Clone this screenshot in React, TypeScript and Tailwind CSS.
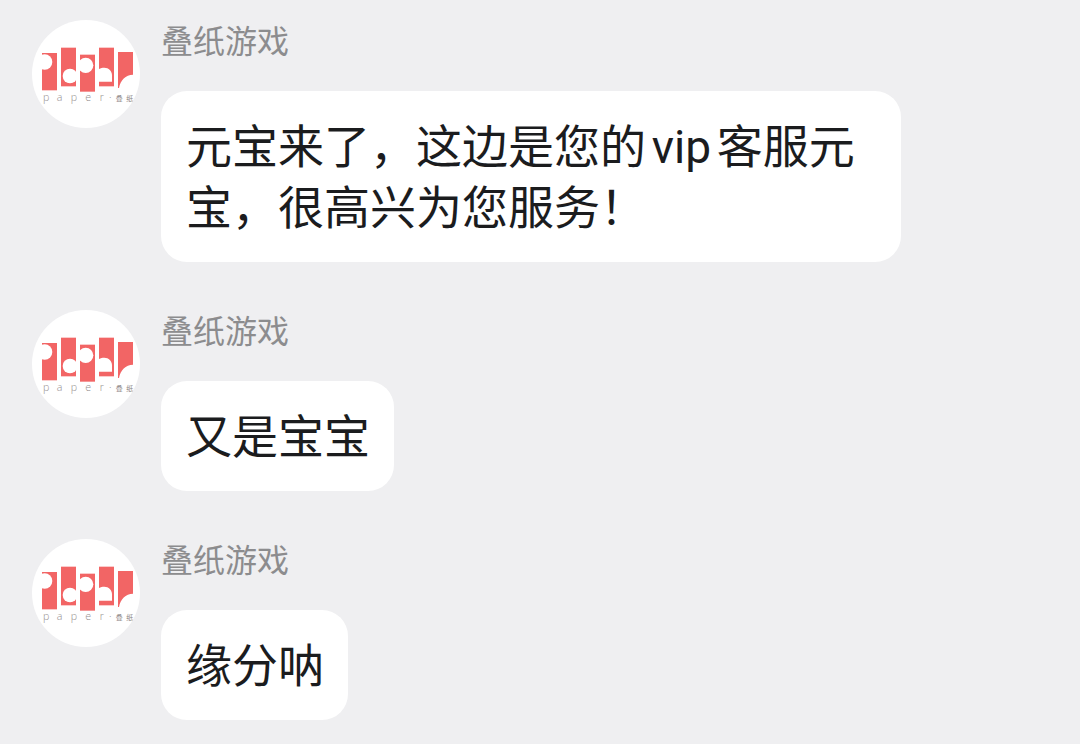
type Message = {
  id: number
  sender: string
  text: string
}

const messages: Message[] = [
  { id: 1, sender: '叠纸游戏', text: '元宝来了，这边是您的vip客服元宝，很高兴为您服务！' },
  { id: 2, sender: '叠纸游戏', text: '又是宝宝' },
  { id: 3, sender: '叠纸游戏', text: '缘分呐' },
]

function PaperLogo() {
  return (
    <svg viewBox="0 0 324 324" className="w-full h-full" role="img" aria-label="paper 叠纸">
      <g fill="#f26565">
        <rect x="30" y="99" width="45" height="112" />
        <rect x="87" y="83" width="45" height="116" />
        <rect x="144" y="104" width="45" height="111" />
        <rect x="201" y="83" width="45" height="116" />
        <path d="M258 96h45v68c-22 0-38 17-42 40h-3z" />
      </g>
      <g fill="#fff">
        <circle cx="38" cy="126" r="23" />
        <circle cx="114" cy="168" r="22" />
        <circle cx="161" cy="136" r="23" />
        <path d="M201 147c5-3 10-4 16-4 13 0 23 10 23 23v19h-39z" />
      </g>
      <g fill="#948e8e" className="font-['Open_Sans','Noto_Sans_CJK_SC',sans-serif] font-light">
        <text y="244" x="33 74 116 160 203 231" fontSize="32">paper·</text>
        <text y="243" x="251 283" fontSize="21" fill="#8a8484" className="font-normal">叠纸</text>
      </g>
    </svg>
  )
}

function ChatMessage({ message }: { message: Message }) {
  return (
    <li className="flex items-start gap-[21px]">
      <div className="w-[108px] h-[108px] rounded-full bg-white overflow-hidden shrink-0">
        <PaperLogo />
      </div>
      <div className="min-w-0">
        <p className="text-[32px] leading-[44px] mb-[27px] text-[#8c8c8e]">{message.sender}</p>
        <p className="w-fit max-w-[740px] rounded-[26px] bg-white pt-[26px] pb-[23px] pl-[25px] pr-6 text-[46px] leading-[61px] text-[#1b1c1e] [text-autospace:normal]">
          {message.text}
        </p>
      </div>
    </li>
  )
}

export default function App() {
  return (
    <main
      lang="zh-CN"
      className="min-h-screen bg-[#efeff1] px-8 pt-5 pb-6 font-['Roboto','Noto_Sans_CJK_SC',sans-serif]"
    >
      <ul className="flex flex-col gap-12">
        {messages.map(message => (
          <ChatMessage key={message.id} message={message} />
        ))}
      </ul>
    </main>
  )
}
